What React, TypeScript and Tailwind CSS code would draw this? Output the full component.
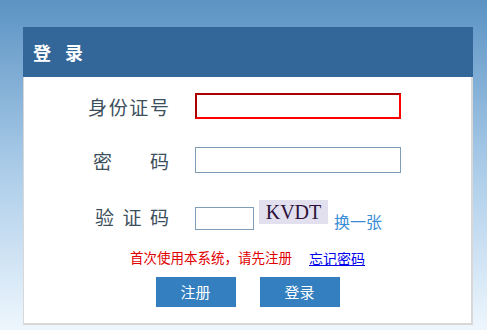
const cjk = { fontFamily: '"Noto Sans CJK SC", "Noto Sans", sans-serif' };

function Label({ chars, width }: { chars: string[]; width: string }) {
  return (
    <div className="w-[145px] flex justify-end shrink-0">
      <div className={`flex justify-between text-[19px] leading-none text-[#3d4f5c] ${width}`}>
        {chars.map((c, i) => (
          <span key={i}>{c}</span>
        ))}
      </div>
    </div>
  );
}

export default function App() {
  return (
    <div
      className="h-[330px] w-full overflow-hidden bg-gradient-to-b from-[#5b93c3] via-[#a9cbe8] to-[#eef6fd] pt-[27px] pl-[23px]"
      style={cjk}
    >
      <div className="w-[450px] h-[298px] flex flex-col">
        {/* Header */}
        <div className="h-[50px] bg-[#336699] flex items-center pl-[10px] gap-[14px] text-white text-[18px] font-bold">
          <span>登</span>
          <span>录</span>
        </div>

        {/* Body */}
        <div className="flex-1 bg-white border-l border-r-2 border-b-2 border-[#d8d8d8] flex flex-col">
          {/* ID */}
          <div className="flex items-center mt-[16px] h-[26px]">
            <Label chars={["身", "份", "证", "号"]} width="w-[81px]" />
            <input className="ml-[26px] w-[206px] h-[26px] border-2 [border-style:inset] border-[#ff0000] outline-none bg-white" />
          </div>

          {/* Password */}
          <div className="flex items-center mt-[28px] h-[26px]">
            <Label chars={["密", "码"]} width="w-[76px]" />
            <input
              type="password"
              className="ml-[26px] w-[206px] h-[26px] border border-[#7f9db9] outline-none bg-white"
            />
          </div>

          {/* Captcha */}
          <div className="flex mt-[27px] h-[30px]">
            <div className="flex items-center pt-[2px]">
              <Label chars={["验", "证", "码"]} width="w-[74px]" />
            </div>
            <input className="ml-[26px] self-end w-[59px] h-[23px] border border-[#7f9db9] outline-none bg-white" />
            <div
              className="ml-[5px] w-[69px] h-[24px] bg-[#e2dfee] flex items-center justify-center text-[20px] leading-none text-[#2c0f3a]"
              style={{ fontFamily: '"Liberation Serif", serif' }}
            >
              KVDT
            </div>
            <a className="ml-[6px] self-end mb-[1px] text-[16px] leading-none text-[#3a8dd6] cursor-pointer">换一张</a>
          </div>

          {/* Notice */}
          <div className="flex justify-center items-center mt-[19px] h-[18px] text-[13.5px] leading-none">
            <span className="text-[#e00000]">首次使用本系统，请先注册</span>
            <a className="ml-[17px] text-[14px] text-[#0000ee] underline cursor-pointer">忘记密码</a>
          </div>

          {/* Buttons */}
          <div className="flex justify-center gap-[24px] mt-[10px]">
            <button className="w-[80px] h-[30px] bg-[#337fbf] text-white text-[15px]">注册</button>
            <button className="w-[80px] h-[30px] bg-[#337fbf] text-white text-[15px]">登录</button>
          </div>
        </div>
      </div>
    </div>
  );
}
